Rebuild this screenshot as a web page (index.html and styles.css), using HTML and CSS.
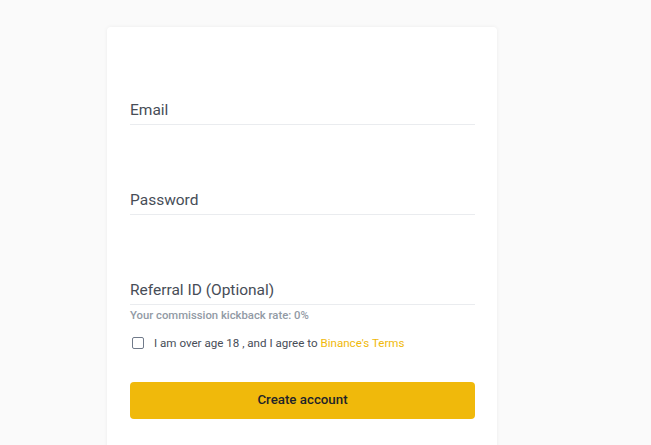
FILE: index.html
```html
<!DOCTYPE html>
<html>
<head>
<meta charset="utf-8">
<link rel="stylesheet" href="styles.css">
</head>
<body>
<div class="page">
  <div class="card">
    <div class="field"><div class="label">Email</div></div>
    <div class="field"><div class="label">Password</div></div>
    <div class="field"><div class="label">Referral ID (Optional)</div></div>
    <div class="hint">Your commission kickback rate: 0%</div>
    <label class="agree">
      <span class="box"></span>
      <span class="agree-text">I am over age 18 , and I agree to <span class="link">Binance's Terms</span></span>
    </label>
    <div class="btn">Create account</div>
  </div>
</div>
</body>
</html>
```

FILE: styles.css
```css
html, body {
  margin: 0;
  padding: 0;
  background: #fafafa;
  font-family: Roboto, "Liberation Sans", sans-serif;
  overflow: hidden;
}
.page {
  padding: 27px 0 0 107px;
  height: 445px;
  box-sizing: border-box;
}
.card {
  width: 390px;
  height: 440px;
  box-sizing: border-box;
  background: #fff;
  border-radius: 4px;
  box-shadow: 0 0 4px rgba(0, 0, 0, 0.06);
  padding: 8px 22px 0 23px;
}
.field {
  height: 90px;
  box-sizing: border-box;
  display: flex;
  flex-direction: column;
  justify-content: flex-end;
  border-bottom: 1px solid #eaecef;
}
.label {
  font-size: 15.5px;
  line-height: 20px;
  padding-bottom: 4px;
  color: #474d57;
}
.hint {
  margin-top: 3px;
  font-size: 11.3px;
  line-height: 16px;
  font-weight: 500;
  color: #929aa5;
}
.agree {
  display: flex;
  align-items: center;
  margin-top: 11px;
  height: 16px;
  font-size: 11.6px;
  color: #474d57;
}
.box {
  width: 10px;
  height: 10px;
  border: 1.5px solid #707a8a;
  border-radius: 2px;
  margin-left: 2px;
  margin-right: 10px;
}
.link {
  color: #f0b90b;
}
.btn {
  margin-top: 31px;
  height: 37px;
  box-sizing: border-box;
  padding-bottom: 3px;
  border-radius: 4px;
  background: #f0b90b;
  color: #1e2329;
  font-size: 13.3px;
  font-weight: 500;
  display: flex;
  align-items: center;
  justify-content: center;
}
```
